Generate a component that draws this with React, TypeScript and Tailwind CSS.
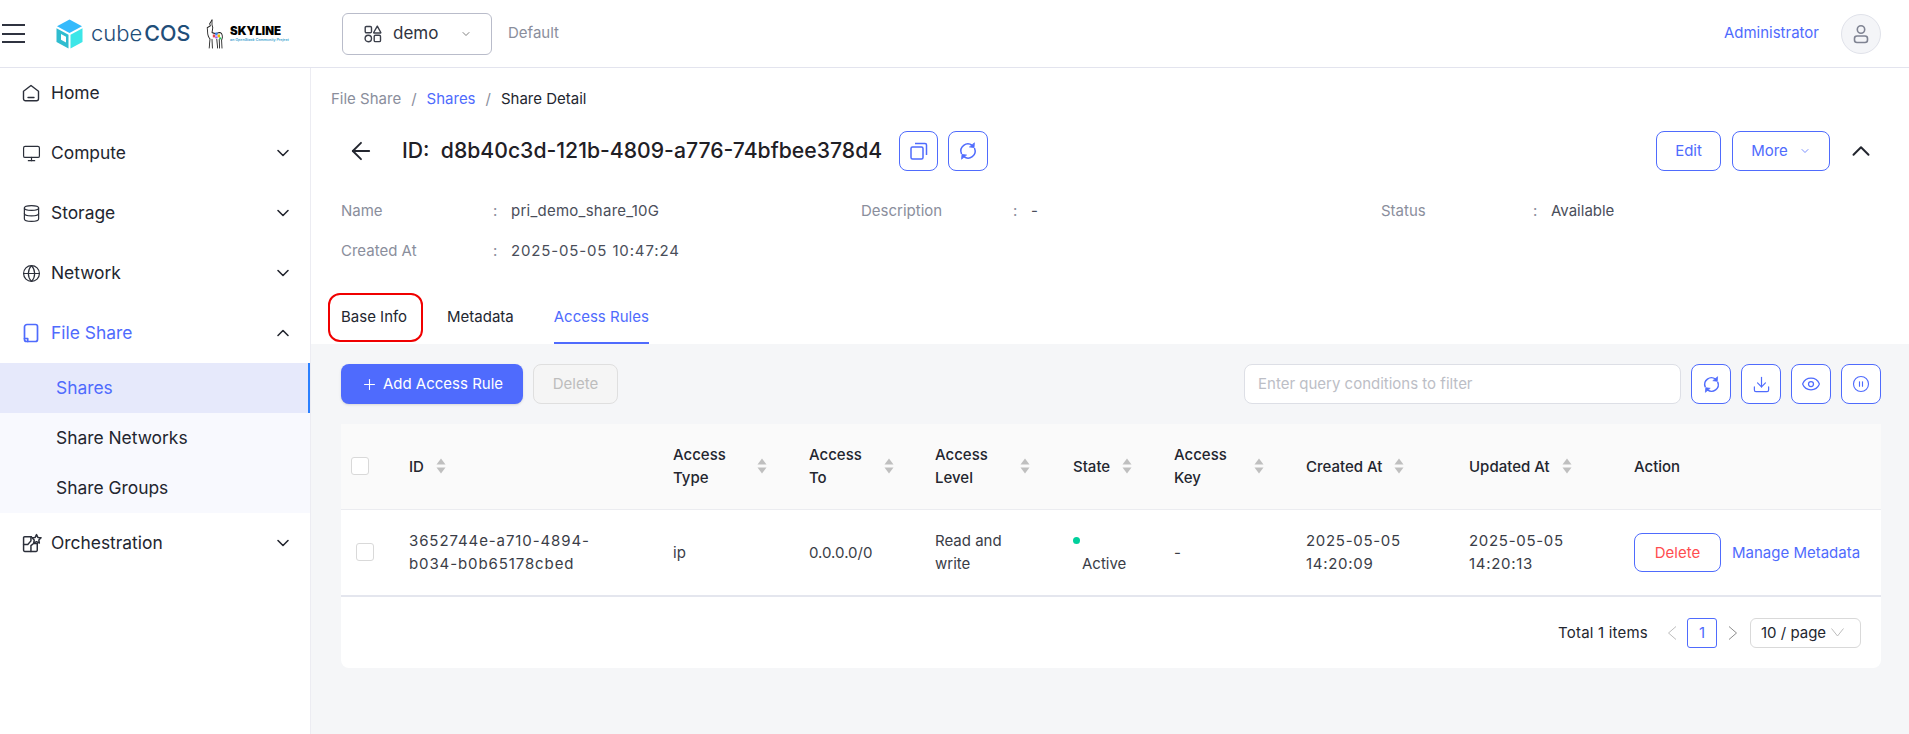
import React from "react";
import { ChevronDown, ChevronUp, Monitor, Database, Globe, ArrowLeft, Plus, Eye, CirclePause, Download } from "lucide-react";

const BLUE = "text-[#4f6bfd]";

function Refresh({ size = 20 }: { size?: number }) {
  return (
    <svg width={size} height={size} viewBox="0 0 20 20" fill="none" stroke="currentColor" strokeWidth="1.5" strokeLinecap="round">
      <path d="M3.4 12.5A7 7 0 0 1 14.2 4.4" />
      <path d="M16.6 7.5A7 7 0 0 1 5.8 15.6" />
      <path d="M16.4 2.2 16 6.6l-4.2-.6z" fill="currentColor" strokeWidth="0.8" strokeLinejoin="round" />
      <path d="M3.6 17.8 4 13.4l4.2.6z" fill="currentColor" strokeWidth="0.8" strokeLinejoin="round" />
    </svg>
  );
}

function Sorter() {
  return (
    <svg width="10" height="16" viewBox="0 0 10 16" className="shrink-0 text-[#bfbfbf]" fill="currentColor">
      <path d="M5 0.5 9.5 6.5H.5z" />
      <path d="M5 15.5 9.5 9.5H.5z" />
    </svg>
  );
}

function HomeIcon() {
  return (
    <svg width="18" height="18" viewBox="0 0 18 18" fill="none" stroke="#2b2f3a" strokeWidth="1.4" strokeLinejoin="round" strokeLinecap="round">
      <path d="M1.5 7.2 9 1.5l7.5 5.700v7.600a2 2 0 0 1-2 2h-11a2 2 0 0 1-2-2z" />
      <path d="M6 13.500h6" />
    </svg>
  );
}

function FileShareIcon() {
  return (
    <svg width="18" height="20" viewBox="0 0 18 20" fill="none" stroke="#4f6bfd" strokeWidth="1.7" strokeLinejoin="round" strokeLinecap="round">
      <path d="M5 1.500h8.500a2 2 0 0 1 2 2v13a2 2 0 0 1-2 2H4.500a2 2 0 0 1-2-2V4a2.500 2.500 0 0 1 2.500-2.500z" />
      <path d="M2.500 15.500h3.200v3" />
    </svg>
  );
}

function OrchIcon() {
  return (
    <svg width="20" height="20" viewBox="0 0 19 19" fill="none" stroke="#2b2f3a" strokeWidth="1.4" strokeLinejoin="round" strokeLinecap="round">
      <path d="M9 3.500H2.500a1 1 0 0 0-1 1v12a1 1 0 0 0 1 1h11a1 1 0 0 0 1-1V10" />
      <path d="M1.500 11h4l3-3.500V3.500" />
      <path d="M8.500 17.500V12l2.500-2h3.500" />
      <path d="M13.800 1.500l1.300 2.700 3 .4-2.100 2.100.5 2.900-2.700-1.400-2.700 1.400.5-2.900-2.100-2.100 3-.4z" />
    </svg>
  );
}

function DemoIcon() {
  return (
    <svg width="18" height="18" viewBox="0 0 18 18" fill="none" stroke="#3b3f4a" strokeWidth="1.4" strokeLinejoin="round">
      <rect x="1.200" y="1.500" width="6.300" height="6.300" rx="1.200" />
      <path d="M13.300 1.200 16.800 7.500a.4.400 0 0 1-.3.500H10a.4.400 0 0 1-.3-.5z" />
      <circle cx="4.300" cy="13.500" r="3.200" />
      <rect x="10.200" y="10.300" width="6.300" height="6.300" rx="1.200" />
    </svg>
  );
}

function CubeLogo() {
  return (
    <svg width="27" height="30" viewBox="0 0 27 31" preserveAspectRatio="none">
      <path d="M13.500 0.500 26 7.500 13.500 14.500 1 7.500z" fill="#35bafc" />
      <path d="M0.500 9.500 12.500 16.300V30.500L0.500 23.700z" fill="#2fbccf" />
      <path d="M5 15.500v6l5 2.800v-6z" fill="#ffffff" />
      <path d="M26.500 9.500V23.700L14.500 30.500V16.300z" fill="#3ce6e8" />
    </svg>
  );
}

function Llama() {
  return (
    <svg width="20" height="30" viewBox="0 0 25 31" preserveAspectRatio="none" fill="none" stroke="#222" strokeWidth="1.100" strokeLinecap="round" strokeLinejoin="round" className="shrink-0">
      <path d="M10 1 7 5l1 2-4 2 .5 4c0 4 1 6 3 7.500L6.500 30" />
      <path d="M10 1v5l1 3-1 5c2 1 6 1 9 0 3 0 4 2 4 5l-1 3 .5 8" />
      <path d="M10 21l.5 9M16 21l1 9M19 21l.5 9" />
      <rect x="11" y="16" width="3" height="3" fill="#e5484d" stroke="none" />
      <rect x="14" y="14" width="3" height="3" fill="#3b82f6" stroke="none" />
      <rect x="17" y="16" width="3" height="3" fill="#f5b700" stroke="none" />
      <rect x="14" y="18" width="3" height="2" fill="#a855f7" stroke="none" />
      <rect x="19" y="19" width="2.500" height="2" fill="#22c55e" stroke="none" />
    </svg>
  );
}

function NavItem({ icon, label, open, active, mb = "mb-[10px]" }: { icon: React.ReactNode; label: string; open?: boolean; active?: boolean; mb?: string }) {
  return (
    <div className={`flex h-[50px] items-center pl-[22px] pr-[17px] ${mb}`}>
      <span className="flex w-[29px] shrink-0 items-center">{icon}</span>
      <span className={`flex-1 text-[17.4px] ${active ? BLUE : "text-[#23262f]"}`}>{label}</span>
      {open === undefined ? null : open ? (
        <ChevronUp size={20} strokeWidth={1.9} color="#23262f" />
      ) : (
        <ChevronDown size={20} strokeWidth={1.9} color="#23262f" />
      )}
    </div>
  );
}

function SubItem({ label, active }: { label: string; active?: boolean }) {
  return (
    <div
      className={`flex h-[50px] items-center pl-[56px] text-[17.4px] ${
        active ? `border-r-2 border-[#2a7fff] bg-[#e6e9fb] ${BLUE}` : "text-[#23262f]"
      }`}
    >
      {label}
    </div>
  );
}

function Sidebar() {
  return (
    <aside className="w-[311px] shrink-0 border-r border-[#ececf2] bg-white">
      <NavItem icon={<HomeIcon />} label="Home" />
      <NavItem icon={<Monitor size={19} strokeWidth={1.5} color="#2b2f3a" />} label="Compute" open={false} />
      <NavItem icon={<Database size={19} strokeWidth={1.5} color="#2b2f3a" />} label="Storage" open={false} />
      <NavItem icon={<Globe size={19} strokeWidth={1.5} color="#2b2f3a" />} label="Network" open={false} />
      <NavItem icon={<FileShareIcon />} label="File Share" open active mb="mb-[5px]" />
      <div className="mb-[5px] bg-[#f8f9fe]">
        <SubItem label="Shares" active />
        <SubItem label="Share Networks" />
        <SubItem label="Share Groups" />
      </div>
      <NavItem icon={<OrchIcon />} label="Orchestration" open={false} />
    </aside>
  );
}

function Header() {
  return (
    <header className="flex h-[68px] shrink-0 items-center border-b border-[#e3e4ee] bg-white">
      <div className="ml-[2px] flex h-[19px] w-[23px] flex-col justify-between">
        <div className="h-[2px] bg-[#2f3340]" />
        <div className="h-[2px] bg-[#2f3340]" />
        <div className="h-[2px] bg-[#2f3340]" />
      </div>
      <div className="ml-[31px] flex items-center">
        <CubeLogo />
      </div>
      <div className="ml-[8px] flex w-[100px] items-baseline leading-none text-[#1f4e79]">
        <span className="text-[22px] font-light">cube</span>
        <span className="ml-[2px] text-[21.5px] font-medium">COS</span>
      </div>
      <div className="ml-[13px] flex w-[82px] items-center">
        <Llama />
        <div className="ml-[6px] flex flex-col">
          <span className="text-[11.5px] font-black leading-[12px] text-black">SKYLINE</span>
          <span className="whitespace-nowrap text-[3.6px] font-semibold italic leading-[6px] text-[#3b9fd0]">an OpenStack Community Project</span>
        </div>
      </div>
      <div className="ml-[56px] flex h-[42px] w-[150px] items-center rounded-[6px] border border-[#b9bcca] pl-[21px]">
        <DemoIcon />
        <span className="ml-[11px] text-[17px] text-[#2f3340]">demo</span>
        <ChevronDown size={12} strokeWidth={1.5} color="#555" className="ml-[22px]" />
      </div>
      <span className="ml-[16px] text-[15px] text-[#8a8e9c]">Default</span>
      <div className="ml-auto mr-[28px] flex items-center">
        <span className={`text-[15px] ${BLUE}`}>Administrator</span>
        <div className="ml-[22px] flex h-[40px] w-[40px] items-center justify-center rounded-full border border-[#e0e2ea] bg-[#f4f5f8]">
          <svg width="18" height="20" viewBox="0 0 18 20" fill="none" stroke="#7f8392" strokeWidth="1.600">
            <circle cx="9" cy="5.500" r="3.700" />
            <rect x="2.500" y="12" width="13" height="6.500" rx="2.500" />
          </svg>
        </div>
      </div>
    </header>
  );
}

function Info({ label, value, valueClass = "" }: { label: string; value: string; valueClass?: string }) {
  return (
    <div className="flex w-[520px] items-center">
      <span className="w-[152px] text-[#8a8e9c]">{label}</span>
      <span className="w-[18px] text-[#8a8e9c]">:</span>
      <span className={`text-[#4a4e5a] ${valueClass}`}>{value}</span>
    </div>
  );
}

function OutlineBtn({ children, className = "" }: { children: React.ReactNode; className?: string }) {
  return (
    <div className={`flex h-[40px] items-center justify-center rounded-[8px] border border-[#4f6bfd] bg-white ${BLUE} ${className}`}>
      {children}
    </div>
  );
}

function DetailTop() {
  return (
    <section className="bg-white">
      <div className="flex h-[63px] items-center pl-[20px] text-[15px]">
        <span className="text-[#8a8e9c]">File Share</span>
        <span className="mx-[10px] text-[#8a8e9c]">/</span>
        <span className={BLUE}>Shares</span>
        <span className="mx-[10px] text-[#8a8e9c]">/</span>
        <span className="text-[#23262f]">Share Detail</span>
      </div>
      <div className="flex h-[40px] items-center pl-[36px] pr-[33px]">
        <ArrowLeft size={28} strokeWidth={1.6} color="#23262f" />
        <span className="ml-[27px] whitespace-nowrap text-[21.2px] font-medium text-[#1f2026]">ID:&nbsp; d8b40c3d-121b-4809-a776-74bfbee378d4</span>
        <OutlineBtn className="ml-[17px] w-[39px]">
          <svg width="20" height="20" viewBox="0 0 20 20" fill="none" stroke="currentColor" strokeWidth="1.500" strokeLinejoin="round">
            <rect x="2" y="6" width="12" height="12" rx="1.500" />
            <path d="M6 2.500h10a1.500 1.500 0 0 1 1.500 1.500v10" />
          </svg>
        </OutlineBtn>
        <OutlineBtn className="ml-[10px] w-[40px]">
          <Refresh />
        </OutlineBtn>
        <OutlineBtn className="ml-auto w-[65px] text-[15px]">Edit</OutlineBtn>
        <OutlineBtn className="ml-[11px] w-[98px] text-[15px]">
          More
          <ChevronDown size={12} strokeWidth={1.5} className="ml-[11px]" />
        </OutlineBtn>
        <ChevronUp size={30} strokeWidth={1.6} color="#23262f" className="ml-[16px]" />
      </div>
      <div className="mt-[20px] pl-[30px] text-[15px]">
        <div className="flex h-[40px] items-center">
          <Info label="Name" value="pri_demo_share_10G" valueClass="tracking-[0.25px]" />
          <Info label="Description" value="-" />
          <Info label="Status" value="Available" />
        </div>
        <div className="flex h-[40px] items-center">
          <Info label="Created At" value="2025-05-05 10:47:24" valueClass="tracking-[0.85px]" />
        </div>
      </div>
      <div className="mt-[21px] flex h-[52px] items-stretch pl-[17px] text-[15px]">
        <div className="mt-[1px] flex h-[49px] w-[95px] items-center rounded-[12px] border-2 border-[#f00000] pl-[11px] text-[#23262f]">Base Info</div>
        <div className="ml-[24px] flex items-center pb-[2px] text-[#23262f]">Metadata</div>
        <div className={`ml-[40px] flex items-center border-b-2 border-[#4f6bfd] ${BLUE}`}>Access Rules</div>
      </div>
    </section>
  );
}

function Th({ children, sort, w, className = "" }: { children: React.ReactNode; sort?: boolean; w?: string; className?: string }) {
  return (
    <th className={`px-[16px] text-left font-medium text-[#23262f] ${className}`}>
      <div className="flex items-center">
        <span className={w ?? "mr-[12px]"}>{children}</span>
        {sort ? <Sorter /> : null}
      </div>
    </th>
  );
}

function Table() {
  return (
    <div className="rounded-[8px] bg-white text-[15px] leading-[23px]">
      <table className="w-full table-fixed border-collapse">
        <colgroup>
          <col className="w-[52px]" />
          <col className="w-[264px]" />
          <col className="w-[136px]" />
          <col className="w-[126px]" />
          <col className="w-[138px]" />
          <col className="w-[101px]" />
          <col className="w-[132px]" />
          <col className="w-[163px]" />
          <col className="w-[165px]" />
          <col />
        </colgroup>
        <thead>
          <tr className="h-[85px] border-b border-[#ebecf0] bg-[#fafafa]">
            <th className="pl-[10px] text-left">
              <div className="h-[18px] w-[18px] rounded-[3px] border border-[#d9d9d9] bg-white" />
            </th>
            <Th sort>ID</Th>
            <Th sort w="w-[84px]">Access<br />Type</Th>
            <Th sort w="w-[75px]">Access<br />To</Th>
            <Th sort w="w-[85px]">Access<br />Level</Th>
            <Th sort>State</Th>
            <Th sort w="w-[80px]">Access<br />Key</Th>
            <Th sort>Created At</Th>
            <Th sort>Updated At</Th>
            <Th>Action</Th>
          </tr>
        </thead>
        <tbody className="text-[#3a3d47]">
          <tr className="h-[87px] border-b-2 border-[#e4e6ee]">
            <td className="pl-[15px]">
              <div className="h-[18px] w-[18px] rounded-[3px] border border-[#d9d9d9] bg-white" />
            </td>
            <td className="whitespace-nowrap px-[16px] tracking-[0.9px]">3652744e-a710-4894-<br />b034-b0b65178cbed</td>
            <td className="px-[16px]">ip</td>
            <td className="px-[16px]">0.0.0.0/0</td>
            <td className="px-[16px]">Read and<br />write</td>
            <td className="px-[16px]">
              <div className="flex h-[23px] items-center"><span className="h-[7px] w-[7px] rounded-full bg-[#00d09c]" /></div>
              <div className="pl-[9px]">Active</div>
            </td>
            <td className="px-[16px]">-</td>
            <td className="px-[16px] tracking-[0.7px]">2025-05-05<br />14:20:09</td>
            <td className="px-[16px] tracking-[0.7px]">2025-05-05<br />14:20:13</td>
            <td className="pl-[16px]">
              <div className="flex items-center">
                <div className="flex h-[39px] w-[87px] items-center justify-center rounded-[8px] border border-[#4f6bfd] text-[#ff4d4f]">Delete</div>
                <span className={`ml-[11px] whitespace-nowrap ${BLUE}`}>Manage Metadata</span>
              </div>
            </td>
          </tr>
        </tbody>
      </table>
      <div className="flex h-[71px] items-center justify-end pr-[20px] text-[#23262f]">
        <span className="tracking-[0.2px]">Total 1 items</span>
        <svg width="10" height="14" viewBox="0 0 10 14" fill="none" stroke="#bdbdbd" strokeWidth="1" className="ml-[19px]"><path d="M9 .5 1.500 7 9 13.500" /></svg>
        <div className={`ml-[10px] flex h-[30px] w-[30px] items-center justify-center rounded-[3px] border border-[#4f6bfd] ${BLUE}`}>1</div>
        <svg width="10" height="14" viewBox="0 0 10 14" fill="none" stroke="#8c8c8c" strokeWidth="1" className="ml-[11px]"><path d="M1 .5 8.500 7 1 13.500" /></svg>
        <div className="ml-[12px] flex h-[30px] w-[111px] items-center rounded-[6px] border border-[#d9d9d9] pl-[10px]">
          <span>10 / page</span>
          <svg width="13" height="9" viewBox="0 0 13 9" fill="none" stroke="#bdbdbd" strokeWidth="1" className="ml-[5px]"><path d="M.5 .5 6.500 8 12.500 .5" /></svg>
        </div>
      </div>
    </div>
  );
}

function Content() {
  return (
    <section className="bg-[#f5f6f8] pb-[67px] pl-[30px] pr-[28px] pt-[20px]">
      <div className="flex h-[40px] items-center text-[15px]">
        <div className="flex h-[40px] w-[182px] items-center justify-center rounded-[8px] bg-[#4f6bfd] text-white shadow-sm">
          <Plus size={17} strokeWidth={1.5} />
          <span className="ml-[5px]">Add Access Rule</span>
        </div>
        <div className="ml-[10px] flex h-[40px] w-[85px] items-center justify-center rounded-[8px] border border-[#dfdfdf] bg-[#f5f5f5] text-[#bdbdbd]">Delete</div>
        <div className="ml-auto flex h-[40px] w-[437px] items-center rounded-[8px] border border-[#dddfe6] bg-white pl-[13px] text-[#bcbec6]">Enter query conditions to filter</div>
        <OutlineBtn className="ml-[10px] w-[40px] bg-transparent"><Refresh size={19} /></OutlineBtn>
        <OutlineBtn className="ml-[10px] w-[40px]"><Download size={19} strokeWidth={1.5} /></OutlineBtn>
        <OutlineBtn className="ml-[10px] w-[40px]"><Eye size={20} strokeWidth={1.5} /></OutlineBtn>
        <OutlineBtn className="ml-[10px] w-[40px]"><CirclePause size={18} strokeWidth={1.5} /></OutlineBtn>
      </div>
      <div className="mt-[20px]">
        <Table />
      </div>
    </section>
  );
}

export default function App() {
  return (
    <div className="flex h-[734px] flex-col overflow-hidden bg-white font-['Inter',sans-serif]">
      <Header />
      <div className="flex min-h-0 flex-1">
        <Sidebar />
        <main className="min-w-0 flex-1 bg-[#f5f6f8]">
          <DetailTop />
          <Content />
        </main>
      </div>
    </div>
  );
}
